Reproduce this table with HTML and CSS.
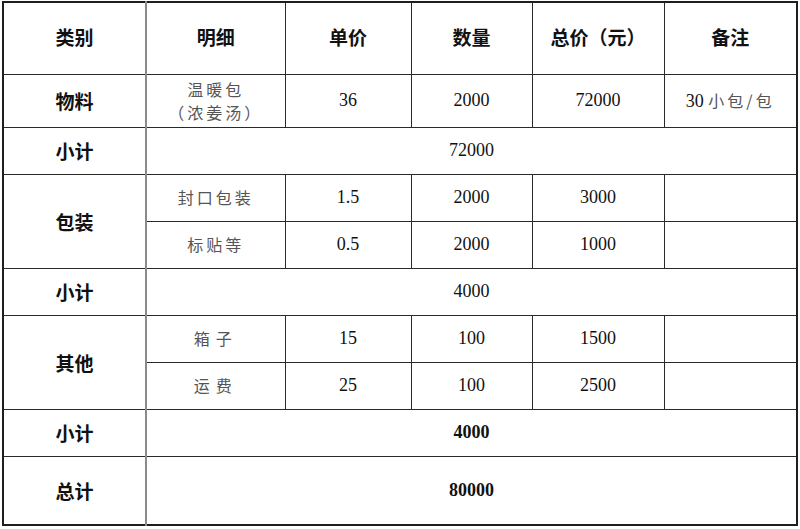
FILE: index.html
```html
<!DOCTYPE html>
<html lang="zh">
<head>
<meta charset="utf-8">
<title>费用明细</title>
<link rel="stylesheet" href="styles.css">
</head>
<body>
<table class="sheet">
  <colgroup>
    <col class="c1"><col class="c2"><col class="c3"><col class="c4"><col class="c5"><col class="c6">
  </colgroup>
  <tr class="r-head">
    <th class="cat">类别</th><th>明细</th><th>单价</th><th>数量</th><th>总价（元）</th><th>备注</th>
  </tr>
  <tr class="r-item">
    <th class="cat">物料</th>
    <td class="cn">温暖包<br>（浓姜汤）</td>
    <td>36</td><td>2000</td><td>72000</td>
    <td>30 <span class="cn">小包/包</span></td>
  </tr>
  <tr class="r-row">
    <th class="cat">小计</th><td colspan="5">72000</td>
  </tr>
  <tr class="r-row">
    <th class="cat" rowspan="2">包装</th>
    <td class="cn">封口包装</td><td>1.5</td><td>2000</td><td>3000</td><td></td>
  </tr>
  <tr class="r-row">
    <td class="cn">标贴等</td><td>0.5</td><td>2000</td><td>1000</td><td></td>
  </tr>
  <tr class="r-row">
    <th class="cat">小计</th><td colspan="5">4000</td>
  </tr>
  <tr class="r-row">
    <th class="cat" rowspan="2">其他</th>
    <td class="cn wide">箱子</td><td>15</td><td>100</td><td>1500</td><td></td>
  </tr>
  <tr class="r-row">
    <td class="cn wide">运费</td><td>25</td><td>100</td><td>2500</td><td></td>
  </tr>
  <tr class="r-row">
    <th class="cat">小计</th><td colspan="5" class="strong">4000</td>
  </tr>
  <tr class="r-total">
    <th class="cat">总计</th><td colspan="5" class="strong">80000</td>
  </tr>
</table>
</body>
</html>
```
FILE: styles.css
```css
html, body {
  margin: 0;
  padding: 0;
  background: #ffffff;
}
body {
  padding: 1px 0 0 2px;
}
.sheet {
  border-collapse: collapse;
  table-layout: fixed;
  width: 796px;
  border: 2px solid #1e1e1e;
  font-family: "Liberation Serif", "Noto Sans CJK SC", serif;
  font-size: 18px;
  color: #111;
}
.c1 { width: 143px; }
.c2 { width: 139px; }
.c3 { width: 126px; }
.c4 { width: 121px; }
.c5 { width: 132px; }
.c6 { width: 133px; }
.sheet th, .sheet td {
  border: 1px solid #2a2a2a;
  text-align: center;
  vertical-align: middle;
  padding: 0;
}
.sheet th {
  font-family: "Liberation Serif", "Noto Sans CJK SC", serif;
  font-weight: bold;
  font-size: 19px;
  color: #111;
}
.sheet .cat {
  border-right: 2px solid #8a8a8a;
}
.r-head { height: 72px; }
.r-head th { padding-bottom: 4px; }
.r-item { height: 53px; }
.r-row { height: 47px; }
.r-total { height: 69px; }
.cn {
  font-family: "Noto Sans CJK SC", sans-serif;
  font-size: 16px;
  color: #555;
  letter-spacing: 3px;
  line-height: 23px;
}
.cn.wide { letter-spacing: 6px; }
.strong { font-weight: bold; }
```
